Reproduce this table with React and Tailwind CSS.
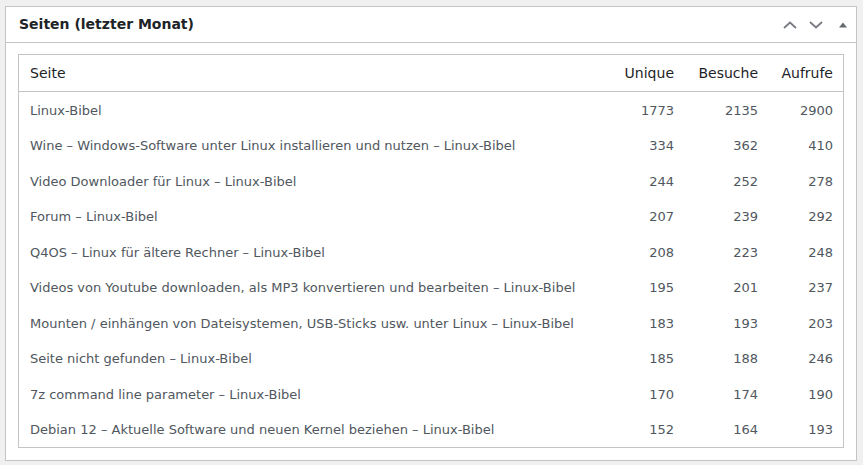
import React from "react";

const rows = [
  ["Linux-Bibel", 1773, 2135, 2900],
  ["Wine – Windows-Software unter Linux installieren und nutzen – Linux-Bibel", 334, 362, 410],
  ["Video Downloader für Linux – Linux-Bibel", 244, 252, 278],
  ["Forum – Linux-Bibel", 207, 239, 292],
  ["Q4OS – Linux für ältere Rechner – Linux-Bibel", 208, 223, 248],
  ["Videos von Youtube downloaden, als MP3 konvertieren und bearbeiten – Linux-Bibel", 195, 201, 237],
  ["Mounten / einhängen von Dateisystemen, USB-Sticks usw. unter Linux – Linux-Bibel", 183, 193, 203],
  ["Seite nicht gefunden – Linux-Bibel", 185, 188, 246],
  ["7z command line parameter – Linux-Bibel", 170, 174, 190],
  ["Debian 12 – Aktuelle Software und neuen Kernel beziehen – Linux-Bibel", 152, 164, 193],
];

const App = () => {
  return (
    <div
      className="w-[863px] h-[465px] bg-[#f0f0f1] pl-[5px] pt-[6px]"
      style={{ fontFamily: '"DejaVu Sans", sans-serif' }}
    >
      <div className="w-[852px] h-[455px] bg-white border border-[#c3c4c7] flex flex-col">
        <div className="h-[36px] border-b border-[#c3c4c7] flex items-center pl-[13px] pr-[8px]">
          <h2 className="flex-1 text-[14px] font-bold text-[#1d2327]">Seiten (letzter Monat)</h2>
          <div className="flex items-center gap-[12px] text-[#787c82]">
            <svg width="14" height="8" viewBox="0 0 14 8" fill="none" stroke="currentColor" strokeWidth="1.8">
              <path d="M1 7 L7 1.5 L13 7" />
            </svg>
            <svg width="14" height="8" viewBox="0 0 14 8" fill="none" stroke="currentColor" strokeWidth="1.8">
              <path d="M1 1 L7 6.5 L13 1" />
            </svg>
            <svg width="10" height="6" viewBox="0 0 10 6" className="ml-[3px] text-[#646970]">
              <path d="M1 5.5 L5 0.5 L9 5.5 Z" fill="currentColor" />
            </svg>
          </div>
        </div>
        <div className="mt-[11px] mx-[12px] border border-[#c3c4c7]">
          <div className="h-[37px] border-b border-[#c3c4c7] flex items-center text-[14px] text-[#1d2327]">
            <div className="flex-1 pl-[11px]">Seite</div>
            <div className="w-[70px] text-right pr-[10px]">Unique</div>
            <div className="w-[84px] text-right pr-[10px]">Besuche</div>
            <div className="w-[75px] text-right pr-[10px]">Aufrufe</div>
          </div>
          {rows.map(([title, u, b, a]) => (
            <div key={title} className="h-[35.5px] pt-[1px] flex items-center text-[13px] text-[#50575e]">
              <div className="flex-1 pl-[11px] whitespace-nowrap">{title}</div>
              <div className="w-[70px] text-right pr-[10px]">{u}</div>
              <div className="w-[84px] text-right pr-[10px]">{b}</div>
              <div className="w-[75px] text-right pr-[10px]">{a}</div>
            </div>
          ))}
        </div>
      </div>
    </div>
  );
};

export default App;
